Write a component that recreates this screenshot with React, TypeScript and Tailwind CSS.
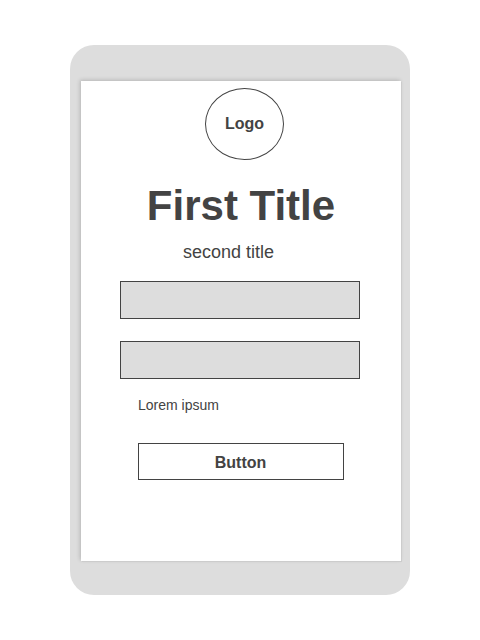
export default function App() {
  return (
    <main className="flex min-h-screen items-center justify-center bg-white font-['Liberation_Sans',Arial,sans-serif] text-[#434343] antialiased">
      <section className="w-full max-w-[340px] rounded-3xl bg-[#dddddd] pt-9 pr-[9px] pb-[34px] pl-[11px]">
        <form
          className="flex flex-col items-center bg-white pt-[7px] pb-[81px] shadow-[1px_1px_0_#cccccc,-1px_-1px_4px_rgba(0,0,0,0.18)]"
          onSubmit={(e) => e.preventDefault()}
        >
          <div className="ml-[7px] flex h-[72px] w-[79px] items-center justify-center rounded-[50%] border border-[#434343] text-base font-bold">
            Logo
          </div>
          <h1 className="mt-[21px] text-[42px] leading-[50px] font-bold">First Title</h1>
          <h2 className="mt-[11px] mr-[25px] text-lg leading-5">second title</h2>
          <div className="mt-[19px] flex w-full flex-col gap-[22px] pr-[41px] pl-[39px]">
            <input type="text" aria-label="First field" className="h-[38px] w-full border border-[#434343] bg-[#dddddd] px-2" />
            <input type="text" aria-label="Second field" className="h-[38px] w-full border border-[#434343] bg-[#dddddd] px-2" />
          </div>
          <div className="mt-4 w-full px-[57px]">
            <p className="text-sm leading-5">Lorem ipsum</p>
            <button type="submit" className="mt-7 h-[37px] w-full border border-[#434343] bg-white pt-0.5 pr-px text-base font-bold">
              Button
            </button>
          </div>
        </form>
      </section>
    </main>
  );
}
